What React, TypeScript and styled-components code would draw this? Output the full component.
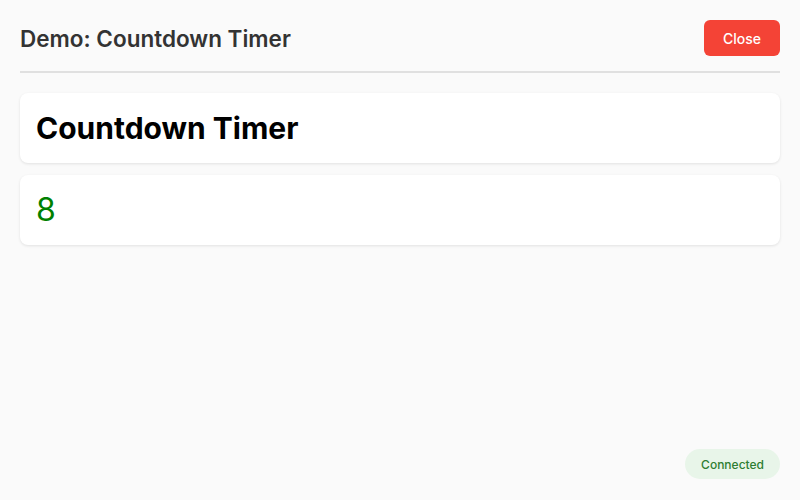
import React from "react";
import styled, { createGlobalStyle } from "styled-components";

const Global = createGlobalStyle`
  html, body { margin: 0; padding: 0; background: #fafafa; }
  body { font-family: Inter, "Noto Sans", "Liberation Sans", sans-serif; }
  * { box-sizing: border-box; }
`;

const Page = styled.div`
  min-height: 100vh;
  padding: 20px;
  background: #fafafa;
`;

const Header = styled.header`
  display: flex;
  align-items: center;
  justify-content: space-between;
  padding-bottom: 15px;
  border-bottom: 2px solid #e0e0e0;
  margin-bottom: 20px;
`;

const Title = styled.h1`
  margin: 0;
  font-size: 22.5px;
  font-weight: 600;
  color: #333;
`;

const CloseButton = styled.button`
  width: 76px;
  height: 36px;
  border: none;
  border-radius: 6px;
  background: #f44336;
  color: #fff;
  font-family: inherit;
  font-size: 14px;
  font-weight: 500;
  cursor: pointer;
`;

const Stack = styled.div`
  display: flex;
  flex-direction: column;
  gap: 12px;
`;

const Card = styled.div`
  background: #fff;
  border-radius: 8px;
  padding: 16px;
  box-shadow: 0 1px 3px rgba(0, 0, 0, 0.1);
`;

const CardTitle = styled.h2`
  margin: 0;
  font-size: 30px;
  line-height: 38px;
  font-weight: 700;
  color: #000;
`;

const Count = styled.div<{ $color: string }>`
  font-size: 32px;
  line-height: 38px;
  color: ${(p) => p.$color};
`;

const Status = styled.div`
  position: fixed;
  right: 20px;
  bottom: 21px;
  height: 30px;
  padding: 0 16px;
  display: flex;
  align-items: center;
  border-radius: 15px;
  background: #e8f5e9;
  color: #2e7d32;
  font-size: 12px;
  font-weight: 500;
`;

export default function App() {
  return (
    <>
      <Global />
      <Page>
        <Header>
          <Title>Demo: Countdown Timer</Title>
          <CloseButton>Close</CloseButton>
        </Header>
        <Stack>
          <Card>
            <CardTitle>Countdown Timer</CardTitle>
          </Card>
          <Card>
            <Count $color="green">8</Count>
          </Card>
        </Stack>
        <Status>Connected</Status>
      </Page>
    </>
  );
}
